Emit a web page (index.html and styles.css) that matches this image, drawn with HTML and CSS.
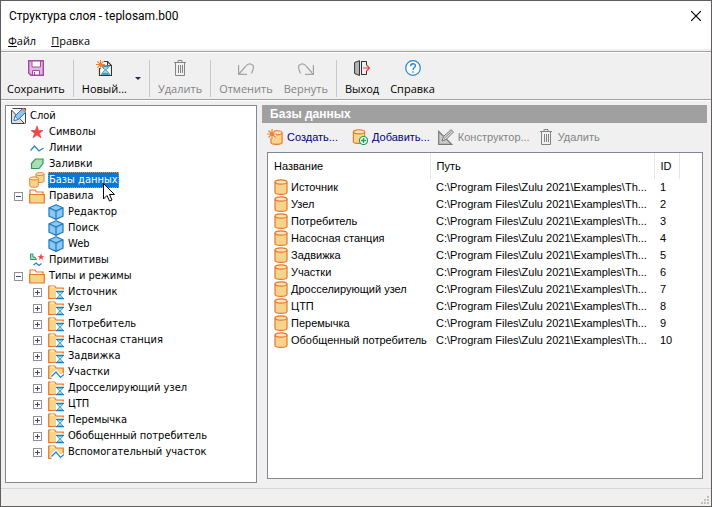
FILE: index.html
```html
<!doctype html>
<html lang="ru">
<head>
	<meta charset="UTF-8">
	<title>Структура слоя - teplosam.b00</title>
	<link rel="stylesheet" href="styles.css">
</head>
<body>
	<!-- icons -->
	<svg class="defs" aria-hidden="true">
		<symbol id="i-save" viewBox="0 0 16 16">
			<path d="M.7.7h14.6v14.6H3L.7 13z" fill="#deb8de" stroke="#a349a4" stroke-width="1.4"/>
			<path d="M4 1h8.500v6H4z" fill="#fff" stroke="#a349a4"/>
			<path d="M4.500 15v-4.500h7V15z" fill="#fff" stroke="#a349a4"/>
			<path d="M6.500 12v3" stroke="#a349a4"/>
		</symbol>
		<symbol id="i-spark" viewBox="0 0 10 10">
			<path d="M5 0v10M0 5h10M1.500 1.500l7 7M8.500 1.500l-7 7" stroke="#ee7f2d" stroke-width="1.200"/>
		</symbol>
		<symbol id="i-glass" viewBox="0 0 8 9">
			<path d="M1.500 1.500v1L4 4.500l2.500-2v-1zM1.500 7.500v-1L4 4.500l2.500 2v1z" fill="#a9e0d0" stroke="#2b93c8" stroke-width=".8"/>
			<path d="M0 .8h8M0 8.200h8" stroke="#1a80b6" stroke-width="1.200"/>
		</symbol>
		<symbol id="i-new" viewBox="0 0 16 16">
			<path d="M8 1.500h3.500l4 4v10h-12V8" fill="#fff" stroke="#333" stroke-width="1.200"/>
			<path d="M11.500 1.500v4h4" fill="none" stroke="#333"/>
			<use href="#i-glass" x="5" y="5" width="9" height="10"/>
			<use href="#i-spark" x="0" y="0" width="9" height="9"/>
		</symbol>
		<symbol id="i-trash" viewBox="0 0 16 16">
			<path d="M2 2.500h12M6 2.500v-2h4v2M3.500 3v12.500h9V3M6.500 5v8M8.500 5v8M10.500 5v8" fill="none" stroke="currentColor"/>
		</symbol>
		<symbol id="i-undo" viewBox="0 0 16 16">
			<path d="M.6 5v9.400H9M1 14L7.500 6.500C11 2 17 4 15 9.500l-1.500 4" fill="none" stroke="#a3a3a3" stroke-width="1.200"/>
		</symbol>
		<symbol id="i-redo" viewBox="0 0 16 16">
			<path d="M15.400 5v9.400H7M15 14L8.500 6.500C5 2-1 4 1 9.500l1.500 4" fill="none" stroke="#a3a3a3" stroke-width="1.200"/>
		</symbol>
		<symbol id="i-exit" viewBox="0 0 16 16">
			<path d="M.6 2.500L5.500.7v14.800L.6 13.500z" fill="#b4b4b4" stroke="#333"/>
			<path d="M7 1.500h5.500V5M7 14.500h5.500V11M7.500 1.500v13" fill="none" stroke="#333"/>
			<path d="M9 8h6.500M12.500 5l3 3-3 3" fill="none" stroke="#ef3b3b" stroke-width="1.200"/>
		</symbol>
		<symbol id="i-help" viewBox="0 0 16 16">
			<circle cx="8" cy="8" r="7.300" fill="#fff" stroke="#2185cf" stroke-width="1.200"/>
			<path d="M5.700 6.200c0-3.300 4.800-3.100 4.800-.4C10.500 7.600 8 7.700 8 10M8 11.200v1.500" fill="none" stroke="#2185cf" stroke-width="1.300"/>
		</symbol>
		<symbol id="i-layer" viewBox="0 0 16 16">
			<path d="M2.500.5h13v15" fill="#f4f4f4" stroke="#444"/>
			<path d="M1.500 2v13.500h13z" fill="#ddd" stroke="#444"/>
			<path d="M4 12.500l1-4.500 7.500-7.300L16 4 8.500 11.300z" fill="#8cc8f2" stroke="#1b75bc"/>
			<path d="M4 12.500l1-4 3.200 2.900z" fill="#fff" stroke="#1b75bc" stroke-width=".7"/>
			<path d="M12.500.7L16 4" stroke="#ee7f5d" stroke-width="2"/>
		</symbol>
		<symbol id="i-star" viewBox="0 0 16 16">
			<path d="M8 2l1.600 4.500H14l-3.600 2.700 1.500 4.500L8 11l-3.900 2.700 1.500-4.500L2 6.500h4.400z" fill="#f04747" stroke="#f04747" stroke-width=".8"/>
		</symbol>
		<symbol id="i-line" viewBox="0 0 16 16">
			<path d="M1.500 10.500l4-4.500 4.500 5L14.500 8" fill="none" stroke="#2185cf" stroke-width="1.200"/>
		</symbol>
		<symbol id="i-fill" viewBox="0 0 16 16">
			<path d="M2.500 12.500v-5l4-4.500H14v4.500l-4 5z" fill="#a8ddb5" stroke="#2c9c55" stroke-width="1.200"/>
		</symbol>
		<symbol id="i-db" viewBox="0 0 14 16">
			<path d="M1 3v10.500c0 2.500 12 2.500 12 0V3" fill="#f6d48a" stroke="#e8762b" stroke-width="1.200"/>
			<ellipse cx="7" cy="3" rx="6" ry="2.200" fill="#fae4b4" stroke="#e8762b" stroke-width="1.200"/>
		</symbol>
		<symbol id="i-dbs" viewBox="0 0 16 16">
			<use href="#i-db" x="6" y="0" width="10" height="11"/>
			<use href="#i-db" x="0" y="4" width="10" height="12"/>
		</symbol>
		<symbol id="i-open" viewBox="0 0 16 16">
			<path d="M1 14.500V2h5l1.500 2H14v3" fill="#fff" stroke="#e8762b" stroke-width="1.200"/>
			<path d="M.7 15V6.500h14.600V15z" fill="#f6d48a" stroke="#e8762b" stroke-width="1.200"/>
		</symbol>
		<symbol id="i-folder" viewBox="0 0 16 16">
			<path d="M.7 14.500V2h6l1.500 2h7.100v10.500z" fill="#f6d48a" stroke="#e8762b" stroke-width="1.200"/>
			<path d="M2.500 3h4" stroke="#fff"/>
		</symbol>
		<symbol id="i-type" viewBox="0 0 16 16">
			<use href="#i-folder" width="16" height="16"/>
			<path d="M8 5.500H16V16H8z" fill="#fff"/>
			<use href="#i-glass" x="8" y="6" width="8" height="10"/>
		</symbol>
		<symbol id="i-type-line" viewBox="0 0 16 16">
			<use href="#i-folder" width="16" height="16"/>
			<path d="M3.500 13l4.500-5 4 5 4-2v4H3.500z" fill="#fff"/>
			<path d="M3.500 12.500L8 7.500l4.500 5.500L16 10" fill="none" stroke="#fff" stroke-width="3"/>
			<path d="M3.500 12.500L8 8l4.500 5.500L16 10.500" fill="none" stroke="#2185cf" stroke-width="1.200"/>
		</symbol>
		<symbol id="i-cube" viewBox="0 0 16 16">
			<path d="M8 .8l7 3v8.400l-7 3.200-7-3.200V3.800z" fill="#8cc8f2" stroke="#1b75bc" stroke-width="1.200"/>
			<path d="M1 3.800L8 7l7-3.200M8 7v8.400" fill="none" stroke="#1b75bc" stroke-width="1.200"/>
		</symbol>
		<symbol id="i-prim" viewBox="0 0 16 16">
			<path d="M1.500 2v5.500h6L6 5H4V2z" fill="#a8ddb5" stroke="#2c9c75"/>
			<path d="M12 1.500l1 2.500h2.300l-1.900 1.600.8 2.400-2.200-1.400L9.800 8l.8-2.400L8.700 4H11z" fill="#f04747"/>
			<path d="M4.500 13l2.500-2 3 2.500 2.500-2" fill="none" stroke="#2185cf" stroke-width="1.200"/>
		</symbol>
		<symbol id="i-dbnew" viewBox="0 0 16 16">
			<use href="#i-db" x="3" y="1" width="13" height="15"/>
			<circle cx="5" cy="5" r="4.500" fill="#f0f0f0"/>
			<use href="#i-spark" x="0" y="0" width="10" height="10"/>
		</symbol>
		<symbol id="i-dbadd" viewBox="0 0 16 16">
			<use href="#i-db" x="0" y="0" width="14" height="15"/>
			<circle cx="11.500" cy="11.500" r="4" fill="#fff" stroke="#219c55" stroke-width="1.200"/>
			<path d="M11.500 9v5M9 11.500h5" stroke="#219c55" stroke-width="1.400"/>
		</symbol>
		<symbol id="i-design" viewBox="0 0 16 16">
			<path d="M.7 2.500v12.800h13z" fill="#ccc" stroke="#777" stroke-width="1.200"/>
			<path d="M4 12l1.500-4.500L13 .7 15.500 3 8 10.500z" fill="#ddd" stroke="#777"/>
			<path d="M6 9.500L13.500 2.500" stroke="#888"/>
		</symbol>
	</svg>

	<div class="window">
		<div class="title">
			<h1>Структура слоя - teplosam.b00</h1>
			<button class="close" aria-label="Закрыть">
				<svg width="10" height="10" viewBox="0 0 10 10"><path d="M0 0l10 10M10 0L0 10" stroke="#000" stroke-width="1.200"/></svg>
			</button>
		</div>
		<div class="menu">
			<button><u>Ф</u>айл</button>
			<button><u>П</u>равка</button>
		</div>
		<div class="toolbar">
			<button class="tool"><svg class="ico"><use href="#i-save"/></svg>Сохранить</button>
			<i class="sep"></i>
			<button class="tool"><svg class="ico"><use href="#i-new"/></svg>Новый...</button>
			<button class="arrow" aria-label="Новый: список"></button>
			<i class="sep"></i>
			<button class="tool" disabled><svg class="ico"><use href="#i-trash"/></svg>Удалить</button>
			<i class="sep"></i>
			<button class="tool" disabled><svg class="ico"><use href="#i-undo"/></svg>Отменить</button>
			<button class="tool" disabled><svg class="ico"><use href="#i-redo"/></svg>Вернуть</button>
			<i class="sep"></i>
			<button class="tool"><svg class="ico"><use href="#i-exit"/></svg>Выход</button>
			<button class="tool"><svg class="ico"><use href="#i-help"/></svg>Справка</button>
		</div>

		<div class="main">
			<div class="tree">
				<div class="row"><svg class="ico"><use href="#i-layer"/></svg><span>Слой</span></div>
				<ul>
					<li><div class="row"><i class="box"></i><svg class="ico"><use href="#i-star"/></svg><span>Символы</span></div></li>
					<li><div class="row"><i class="box"></i><svg class="ico"><use href="#i-line"/></svg><span>Линии</span></div></li>
					<li><div class="row"><i class="box"></i><svg class="ico"><use href="#i-fill"/></svg><span>Заливки</span></div></li>
					<li>
						<div class="row"><i class="box"></i><svg class="ico"><use href="#i-dbs"/></svg><span class="selected">Базы данных
							<svg class="cursor" width="12" height="19" viewBox="0 0 12 19"><path d="M.5.500v15.500l3.500-3.500 2.500 5.500 2.500-1-2.500-5.500h5z" fill="#fff" stroke="#000"/></svg></span></div>
					</li>
					<li>
						<div class="row"><button class="box minus" aria-label="Свернуть"></button><svg class="ico"><use href="#i-open"/></svg><span>Правила</span></div>
						<ul>
							<li><div class="row"><i class="box"></i><svg class="ico"><use href="#i-cube"/></svg><span>Редактор</span></div></li>
							<li><div class="row"><i class="box"></i><svg class="ico"><use href="#i-cube"/></svg><span>Поиск</span></div></li>
							<li><div class="row"><i class="box"></i><svg class="ico"><use href="#i-cube"/></svg><span>Web</span></div></li>
						</ul>
					</li>
					<li><div class="row"><i class="box"></i><svg class="ico"><use href="#i-prim"/></svg><span>Примитивы</span></div></li>
					<li>
						<div class="row"><button class="box minus" aria-label="Свернуть"></button><svg class="ico"><use href="#i-open"/></svg><span>Типы и режимы</span></div>
						<ul>
							<li><div class="row"><button class="box plus" aria-label="Развернуть"></button><svg class="ico"><use href="#i-type"/></svg><span>Источник</span></div></li>
							<li><div class="row"><button class="box plus" aria-label="Развернуть"></button><svg class="ico"><use href="#i-type"/></svg><span>Узел</span></div></li>
							<li><div class="row"><button class="box plus" aria-label="Развернуть"></button><svg class="ico"><use href="#i-type"/></svg><span>Потребитель</span></div></li>
							<li><div class="row"><button class="box plus" aria-label="Развернуть"></button><svg class="ico"><use href="#i-type"/></svg><span>Насосная станция</span></div></li>
							<li><div class="row"><button class="box plus" aria-label="Развернуть"></button><svg class="ico"><use href="#i-type"/></svg><span>Задвижка</span></div></li>
							<li><div class="row"><button class="box plus" aria-label="Развернуть"></button><svg class="ico"><use href="#i-type-line"/></svg><span>Участки</span></div></li>
							<li><div class="row"><button class="box plus" aria-label="Развернуть"></button><svg class="ico"><use href="#i-type"/></svg><span>Дросселирующий узел</span></div></li>
							<li><div class="row"><button class="box plus" aria-label="Развернуть"></button><svg class="ico"><use href="#i-type"/></svg><span>ЦТП</span></div></li>
							<li><div class="row"><button class="box plus" aria-label="Развернуть"></button><svg class="ico"><use href="#i-type"/></svg><span>Перемычка</span></div></li>
							<li><div class="row"><button class="box plus" aria-label="Развернуть"></button><svg class="ico"><use href="#i-type"/></svg><span>Обобщенный потребитель</span></div></li>
							<li><div class="row"><button class="box plus" aria-label="Развернуть"></button><svg class="ico"><use href="#i-type-line"/></svg><span>Вспомогательный участок</span></div></li>
						</ul>
					</li>
				</ul>
			</div>

			<div class="content">
				<h2>Базы данных</h2>
				<div class="actions">
					<button class="create"><svg class="ico"><use href="#i-dbnew"/></svg>Создать...</button>
					<button><svg class="ico"><use href="#i-dbadd"/></svg>Добавить...</button>
					<button disabled><svg class="ico"><use href="#i-design"/></svg>Конструктор...</button>
					<button disabled><svg class="ico"><use href="#i-trash"/></svg>Удалить</button>
				</div>
				<div class="list">
					<table>
						<colgroup><col class="c-name"><col class="c-path"><col class="c-id"><col></colgroup>
						<thead>
							<tr><th>Название</th><th>Путь</th><th>ID</th><td></td></tr>
						</thead>
						<tbody>
							<tr><td><svg class="db"><use href="#i-db"/></svg>Источник</td><td>C:\Program Files\Zulu 2021\Examples\Th...</td><td>1</td><td></td></tr>
							<tr><td><svg class="db"><use href="#i-db"/></svg>Узел</td><td>C:\Program Files\Zulu 2021\Examples\Th...</td><td>2</td><td></td></tr>
							<tr><td><svg class="db"><use href="#i-db"/></svg>Потребитель</td><td>C:\Program Files\Zulu 2021\Examples\Th...</td><td>3</td><td></td></tr>
							<tr><td><svg class="db"><use href="#i-db"/></svg>Насосная станция</td><td>C:\Program Files\Zulu 2021\Examples\Th...</td><td>4</td><td></td></tr>
							<tr><td><svg class="db"><use href="#i-db"/></svg>Задвижка</td><td>C:\Program Files\Zulu 2021\Examples\Th...</td><td>5</td><td></td></tr>
							<tr><td><svg class="db"><use href="#i-db"/></svg>Участки</td><td>C:\Program Files\Zulu 2021\Examples\Th...</td><td>6</td><td></td></tr>
							<tr><td><svg class="db"><use href="#i-db"/></svg>Дросселирующий узел</td><td>C:\Program Files\Zulu 2021\Examples\Th...</td><td>7</td><td></td></tr>
							<tr><td><svg class="db"><use href="#i-db"/></svg>ЦТП</td><td>C:\Program Files\Zulu 2021\Examples\Th...</td><td>8</td><td></td></tr>
							<tr><td><svg class="db"><use href="#i-db"/></svg>Перемычка</td><td>C:\Program Files\Zulu 2021\Examples\Th...</td><td>9</td><td></td></tr>
							<tr><td><svg class="db"><use href="#i-db"/></svg>Обобщенный потребитель</td><td>C:\Program Files\Zulu 2021\Examples\Th...</td><td>10</td><td></td></tr>
						</tbody>
					</table>
				</div>
			</div>
		</div>

		<div class="status">
			<svg width="8" height="8" viewBox="0 0 8 8" fill="#bfbfbf"><path d="M6 0h2v2H6zM3 3h2v2H3zM6 3h2v2H6zM0 6h2v2H0zM3 6h2v2H3zM6 6h2v2H6z"/></svg>
		</div>
	</div>
</body>
</html>
```
FILE: styles.css
```css
*{box-sizing:border-box;}
html,body{height:100%;}
body{margin:0; font:11px/16px "Open Sans","Noto Sans",sans-serif; color:#000; background:#f0f0f0;}
h1,h2,ul{margin:0; padding:0; font-weight:normal; list-style-type:none;}
h1{font:12px/16px Roboto,"Open Sans",sans-serif;}
button{margin:0; padding:0; border:0; background:none; font:inherit; color:inherit;}
.defs{display:none;}
.ico{width:16px; height:16px; flex:none;}

.window{display:flex; flex-direction:column; min-height:100%; border:1px solid #605e5c;}
.title{display:flex; justify-content:space-between; align-items:center; height:29px; padding:0 10px 0 8px; background:#fff;}
.close{display:flex;}
.menu{display:flex; gap:15px; height:19px; padding:2px 7px 0; background:#fff;}

.toolbar{display:flex; align-items:center; gap:8px; height:49px; margin-top:2px; padding:5px 6px 0; border-top:1px solid #a0a0a0; border-bottom:1px solid #a0a0a0; box-shadow:inset 0 1px #fff,0 1px #fff;}
.tool{display:flex; flex-direction:column; align-items:center; gap:5px;}
.tool:disabled{color:#838383;}
.tool+.tool{margin-left:3px;}
.sep{width:1px; height:37px; background:#c8c8ce;}
.arrow{border:3px solid transparent; border-top-color:#1e2b45; border-bottom:0;}

.main{display:flex; flex:1; gap:5px; padding:5px 4px;}
.tree{width:252px; padding:2px 4px; border:1px solid #828790; background:#fff; font:11px/16px "DejaVu Sans Condensed","DejaVu Sans",sans-serif;}
.tree ul{padding-left:4px;}
.tree ul ul{padding-left:19px;}
.row{display:flex; align-items:center; height:16px;}
.row span{margin-left:3px; padding:0 1px; white-space:nowrap;}
.row .selected{position:relative; background:#0078d7; color:#fff; outline:1px dotted #ff8728; outline-offset:-1px;}
.cursor{position:absolute; left:55px; top:11px; z-index:1;}
.box{width:9px; height:9px; margin-right:6px; flex:none;}
.minus,.plus{border:1px solid #919191; background:linear-gradient(#3a4f8f,#3a4f8f) center/5px 1px no-repeat #fff;}
.plus{background:linear-gradient(#3a4f8f,#3a4f8f) center/5px 1px no-repeat,linear-gradient(#3a4f8f,#3a4f8f) center/1px 5px no-repeat #fff;}

.content{display:flex; flex-direction:column; flex:1; min-width:0; font:11px/16px "Liberation Sans",Arial,sans-serif;}
.content h2{height:18px; padding-left:8px; background:#a0a0a0; color:#fff; font:bold 12px/18px "Liberation Sans",Arial,sans-serif;}
.actions{display:flex; gap:8px; height:29px; padding:0 5px 1px;}
.actions button{display:flex; align-items:center; gap:4px; color:#000080; white-space:nowrap;}
.actions button:disabled{color:#838383;}
.actions .create{margin-right:6px;}
.list{flex:1; margin:0 4px 4px 5px; border:1px solid #828790; background:#fff;}
table{width:100%; table-layout:fixed; border-collapse:collapse;}
.c-name{width:162px;}
.c-path{width:224px;}
.c-id{width:25px;}
th,td{height:17px; padding:0 0 0 6px; text-align:left; font-weight:normal; line-height:17px; white-space:nowrap;}
thead th{height:26px; border-right:1px solid #e5e5e5;}
.db{width:14px; height:16px; margin-right:3px; vertical-align:top;}

.status{display:flex; justify-content:flex-end; align-items:flex-end; height:18px; padding:2px; border-top:1px solid #d7d7d7;}
```
